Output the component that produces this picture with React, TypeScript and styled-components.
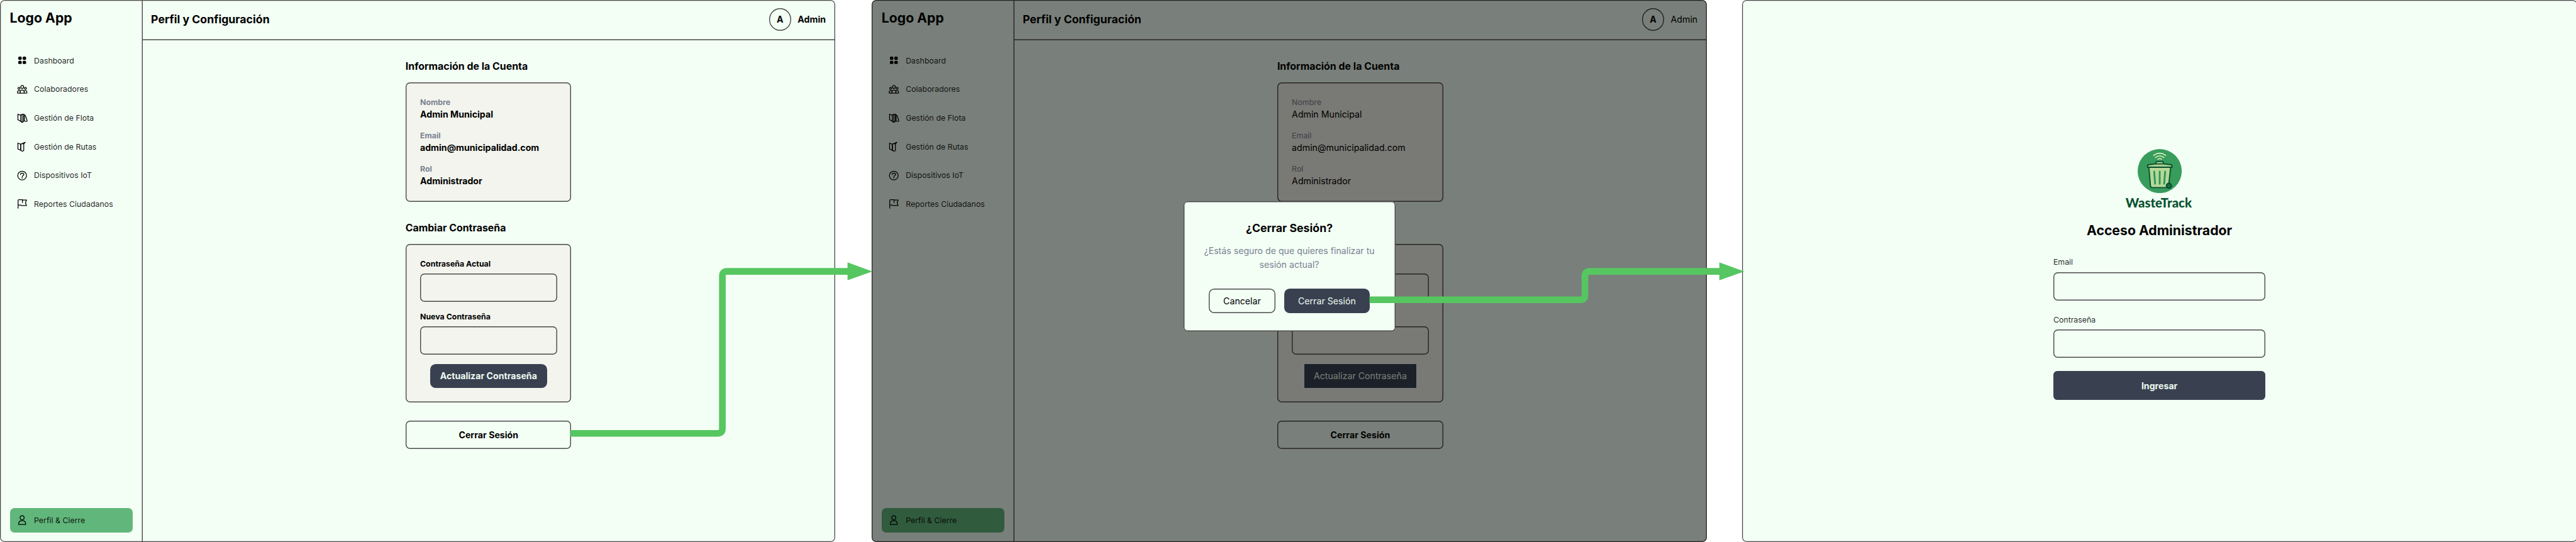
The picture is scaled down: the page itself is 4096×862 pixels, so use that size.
import React from "react";
import styled, { createGlobalStyle, css } from "styled-components";

/* The board is measured in canvas units; u() turns them into screen pixels. */
const SCALE = 4096 / 5784;
const u = (n: number) => `${+(n * SCALE).toFixed(3)}px`;

const color = {
  page: "#f3fef5",
  card: "#f2f4ed",
  cardDim: "#f3f2ea",
  line: "#4a4a4a",
  navy: "#394151",
  navyText: "#eefaf0",
  muted: "#7b8291",
  active: "#61b67b",
  flow: "#56c661",
  brand: "#07512f",
};

const stroke = css`
  box-shadow: inset 0 0 0 ${u(2)} ${color.line};
`;

const GlobalStyle = createGlobalStyle`
  *, *::before, *::after { box-sizing: border-box; }
  body { margin: 0; background: #fff; font-family: Inter, sans-serif; color: #000; }
  h1, h2, p { margin: 0; }
`;

const Board = styled.div`
  position: relative;
  display: flex;
  width: 4096px;
  height: 862px;
  overflow: hidden;
  background: #fff;
`;

const Frame = styled.section<{ $gap?: number }>`
  position: relative;
  flex: none;
  display: flex;
  width: ${u(1875)};
  height: 862px;
  margin-left: ${(p) => u(p.$gap ?? 0)};
  border-radius: ${u(10)};
  overflow: hidden;
  background: ${color.page};
`;

const FrameOutline = styled.div`
  position: absolute;
  inset: 0;
  border-radius: inherit;
  pointer-events: none;
  box-shadow: inset 0 0 0 ${u(1.8)} ${color.line};
`;

/* ---------- sidebar ---------- */

const Sidebar = styled.aside`
  flex: none;
  display: flex;
  flex-direction: column;
  width: ${u(320.4)};
  padding: ${u(19.3)} ${u(22.7)} ${u(21.3)} ${u(22)};
  box-shadow: inset -${u(2)} 0 0 ${color.line};
`;

const Brand = styled.h1`
  font-size: ${u(30)};
  line-height: ${u(40)};
  font-weight: 700;
`;

const Nav = styled.nav`
  flex: 1;
  display: flex;
  flex-direction: column;
  gap: ${u(9.45)};
  margin-top: ${u(49.1)};
`;

const NavItem = styled.a<{ $active?: boolean }>`
  display: flex;
  align-items: center;
  gap: ${u(14)};
  height: ${u(55)};
  padding-left: ${u(14.3)};
  border-radius: ${u(10)};
  font-size: ${u(17.5)};
  color: rgba(0, 0, 0, 0.88);
  ${(p) =>
    p.$active &&
    css`
      margin-top: auto;
      background: ${color.active};
    `}
`;

const Glyph = styled.svg.attrs({ viewBox: "0 0 26 26" })`
  flex: none;
  width: ${u(26)};
  height: ${u(26)};
  overflow: visible;
  fill: none;
  stroke: #000;
  stroke-width: 1.8;
  stroke-linecap: round;
  stroke-linejoin: round;
`;

/* ---------- main area ---------- */

const Main = styled.main`
  flex: 1;
  display: flex;
  flex-direction: column;
`;

const TopBar = styled.header`
  display: flex;
  align-items: center;
  height: ${u(90.4)};
  padding: 0 ${u(21)} ${u(3)} ${u(18.6)};
  box-shadow: inset 0 -${u(2)} 0 ${color.line};
`;

const PageTitle = styled.h2`
  flex: 1;
  font-size: ${u(25)};
  font-weight: 700;
`;

const Avatar = styled.div`
  display: grid;
  place-items: center;
  width: ${u(49.8)};
  height: ${u(49.8)};
  margin-right: ${u(14.8)};
  border-radius: 50%;
  font-size: ${u(20)};
  font-weight: 700;
  ${stroke}
`;

const UserName = styled.span<{ $light?: boolean }>`
  width: ${(p) => u(p.$light ? 60 : 63)};
  font-size: ${u(20)};
  font-weight: ${(p) => (p.$light ? 400 : 700)};
`;

const Column = styled.div`
  display: flex;
  flex-direction: column;
  align-self: center;
  width: ${u(371.7)};
  margin: ${u(44.2)} ${u(1.6)} 0 0;
`;

const SectionTitle = styled.h2<{ $top?: number }>`
  margin: ${(p) => u(p.$top ?? 0)} 0 ${u(20.4)} -${u(0.6)};
  font-size: ${u(22.5)};
  line-height: ${u(30)};
  font-weight: 700;
  white-space: nowrap;
`;

const Card = styled.div<{ $height: number; $dim?: boolean }>`
  display: flex;
  flex-direction: column;
  height: ${(p) => u(p.$height)};
  padding: ${u(32.6)} ${u(32.2)};
  border-radius: ${u(10)};
  background: ${(p) => (p.$dim ? color.cardDim : color.card)};
  ${stroke}
`;

const Detail = styled.div<{ $light?: boolean }>`
  display: flex;
  flex-direction: column;
  margin-bottom: ${u(19.9)};
  font-size: ${u(20)};
  line-height: ${u(30.6)};
  font-weight: ${(p) => (p.$light ? 400 : 700)};
  white-space: nowrap;
`;

const DetailName = styled.span`
  font-size: ${u(17.5)};
  line-height: ${u(24)};
  color: ${color.muted};
`;

const FieldLabel = styled.label<{ $bold?: boolean }>`
  margin-bottom: ${u(10.6)};
  font-size: ${u(17.5)};
  line-height: ${u(24)};
  font-weight: ${(p) => (p.$bold ? 700 : 400)};
  color: ${(p) => (p.$bold ? "#000" : "rgba(0, 0, 0, 0.86)")};
`;

const Field = styled.div<{ $after: number }>`
  height: ${u(64)};
  margin-bottom: ${(p) => u(p.$after)};
  border-radius: ${u(10)};
  ${stroke}
`;

const Button = styled.div<{
  $width?: number;
  $height?: number;
  $filled?: boolean;
  $regular?: boolean;
  $radius?: number;
}>`
  display: flex;
  align-items: center;
  justify-content: center;
  align-self: center;
  width: ${(p) => (p.$width ? u(p.$width) : "100%")};
  height: ${(p) => u(p.$height ?? 54.7)};
  border-radius: ${(p) => u(p.$radius ?? 12.5)};
  font-size: ${u(20)};
  font-weight: ${(p) => (p.$regular ? 400 : 700)};
  white-space: nowrap;
  ${(p) =>
    p.$filled
      ? css`
          background: ${color.navy};
          color: ${color.navyText};
        `
      : stroke}
`;

const SignOut = styled(Button)`
  flex: none;
  margin-top: ${u(40.6)};
`;

/* ---------- dialog ---------- */

const Backdrop = styled.div`
  position: absolute;
  inset: 0;
  display: flex;
  align-items: center;
  justify-content: center;
  padding-bottom: ${u(20.4)};
  background: rgba(0, 0, 0, 0.5);
`;

const Dialog = styled.div`
  display: flex;
  flex-direction: column;
  align-items: center;
  width: ${u(476)};
  height: ${u(292)};
  padding-top: ${u(44)};
  border-radius: ${u(9)};
  background: ${color.page};
  ${stroke}
`;

const DialogTitle = styled.h2`
  font-size: ${u(25)};
  line-height: ${u(30)};
  font-weight: 700;
`;

const DialogText = styled.p`
  width: ${u(400)};
  margin: ${u(22)} 0 ${u(39.4)};
  font-size: ${u(20)};
  line-height: ${u(30)};
  text-align: center;
  color: ${color.muted};
`;

const DialogActions = styled.div`
  display: flex;
  gap: ${u(19.4)};
`;

/* ---------- login ---------- */

const Login = styled.div`
  display: flex;
  flex-direction: column;
  align-items: stretch;
  width: ${u(476.6)};
  margin: ${u(335)} auto 0;
`;

const LogoMark = styled.svg`
  align-self: center;
  width: ${u(99)};
  height: ${u(99)};
`;

const LogoName = styled.div`
  margin: ${u(1.4)} ${u(3.4)} 0 0;
  font-family: Lato, sans-serif;
  font-size: ${u(28.8)};
  line-height: ${u(40)};
  font-weight: 900;
  text-align: center;
  color: ${color.brand};
`;

const LoginTitle = styled.h2`
  margin: ${u(21.4)} 0 ${u(39.9)};
  font-size: ${u(30)};
  line-height: ${u(40)};
  font-weight: 700;
  text-align: center;
`;

const FlowLines = styled.svg`
  position: absolute;
  inset: 0;
  width: 4096px;
  height: 862px;
  pointer-events: none;
`;

/* ---------- icons ---------- */

const GridIcon = () => (
  <Glyph>
    <g fill="#000" stroke="none">
      <rect x="4.3" y="4.2" width="7.7" height="7.3" rx="2.4" />
      <rect x="14.2" y="4.2" width="7.7" height="7.3" rx="2.4" />
      <rect x="4.3" y="13.7" width="7.7" height="7.3" rx="2.4" />
      <rect x="14.2" y="13.7" width="7.7" height="7.3" rx="2.4" />
    </g>
  </Glyph>
);

const PeopleIcon = () => (
  <Glyph>
    <circle cx="13.1" cy="7.4" r="3.3" />
    <circle cx="5.8" cy="10.5" r="2.2" />
    <circle cx="20.4" cy="10.5" r="2.2" />
    <path d="M8.6 21.3v-2.4a4.5 4.5 0 0 1 9 0v2.4z" />
    <path d="M8.6 21.3H2.7v-2.6c0-1.9 1.2-3 3-3 1.3 0 2.2.5 2.9 1.5M17.6 21.3h5.9v-2.6c0-1.9-1.2-3-3-3-1.3 0-2.2.5-2.9 1.5" />
  </Glyph>
);

const FleetIcon = () => (
  <Glyph>
    <path d="M3.5 4.8v12.7l6.1 3.3V7.2L3.5 5.4" />
    <path d="M9.6 7.2l3.2-2h3.4v16.6l-2 1.2h-2.4l-2.2-2.2M12.9 6v16.8" />
    <path d="M16.2 5.4c2.6.6 3.6 1.6 4.4 3.8l3.4 9.6c.5 1.6-.1 2.4-1.6 2.5-2.3.2-4.2-.5-6.2-1.9M18.2 8v11" />
  </Glyph>
);

const RoutesIcon = () => (
  <Glyph>
    <path d="M3.5 4.8v13.4l6.3 3V7.4L3.5 5.6" />
    <path d="M9.8 7.4v13.8l2.6 1.8h2.2l2-1.6V6.8" />
    <path d="M9.8 7.4l4-1.6 6.2-2.6-3.4 3.6M13.2 6.6l3.4.2" />
  </Glyph>
);

const HelpIcon = () => (
  <Glyph>
    <circle cx="13" cy="13" r="9.8" />
    <path d="M9.2 10.6c.2-1.9 1.8-3 3.8-3 2.2 0 3.9 1.2 3.9 3.1 0 2.6-3.7 2.3-3.8 5" />
    <circle cx="13.1" cy="18.2" r=".4" />
  </Glyph>
);

const FlagIcon = () => (
  <Glyph>
    <path d="M3.9 22.8V5.4c0-1.2.6-1.8 1.8-1.8h8v6.6" />
    <path d="M13.7 4.4H23l-2.6 6.1 2.4 6.3H10.4l-1.2-1.2H4.2" />
  </Glyph>
);

const UserIcon = () => (
  <Glyph>
    <circle cx="13" cy="7.6" r="4.5" />
    <path d="M5.2 22.8v-1.6c0-4.2 3.2-6.8 7.8-6.8s7.8 2.6 7.8 6.8v1.6z" />
  </Glyph>
);

const TrashLogo = () => (
  <LogoMark viewBox="178.5 45 297 297">
    <circle cx="327" cy="193.5" r="148.5" fill="#389c5c" />
    <g fill="none" stroke="#e6f3c2" strokeWidth="6.5" strokeLinecap="round">
      <path d="M286 88Q327 58 368 88" />
      <path d="M299 102Q327 81 355 102" />
      <path d="M314 114Q327 106 340 114" />
    </g>
    <g stroke="#07512f" strokeWidth="8" strokeLinejoin="round" strokeLinecap="round">
      <path
        d="M254 168L265 294Q266 305 277 305H375Q386 305 387 294L401 168Z"
        fill="#b5d898"
      />
      <path d="M302 146V138Q302 129 311 129H343Q352 129 352 138V146Z" fill="#b5d898" />
      <path
        d="M245 168V160Q245 151 256 150L300 145H354L398 150Q410 151 410 160V168Z"
        fill="#a6cf8b"
      />
    </g>
    <g stroke="#2f9657" strokeWidth="12" strokeLinecap="round">
      <path d="M290 197L296 279" />
      <path d="M327 197V279" />
      <path d="M364 197L357 279" />
    </g>
    <circle cx="389" cy="293" r="21.5" fill="#07512f" />
    <circle cx="389" cy="293" r="9.5" fill="#2a8350" />
    <circle cx="389" cy="293" r="4.5" fill="#07512f" />
  </LogoMark>
);

const navItems = [
  { label: "Dashboard", Icon: GridIcon },
  { label: "Colaboradores", Icon: PeopleIcon },
  { label: "Gestión de Flota", Icon: FleetIcon },
  { label: "Gestión de Rutas", Icon: RoutesIcon },
  { label: "Dispositivos IoT", Icon: HelpIcon },
  { label: "Reportes Ciudadanos", Icon: FlagIcon },
];

const details = [
  ["Nombre", "Admin Municipal"],
  ["Email", "admin@municipalidad.com"],
  ["Rol", "Administrador"],
];

function ProfileScreen({ gap, confirming }: { gap?: number; confirming?: boolean }) {
  return (
    <Frame $gap={gap}>
      <Sidebar>
        <Brand>Logo App</Brand>
        <Nav>
          {navItems.map(({ label, Icon }) => (
            <NavItem key={label}>
              <Icon />
              {label}
            </NavItem>
          ))}
          <NavItem $active>
            <UserIcon />
            Perfil &amp; Cierre
          </NavItem>
        </Nav>
      </Sidebar>
      <Main>
        <TopBar>
          <PageTitle>Perfil y Configuración</PageTitle>
          <Avatar>A</Avatar>
          <UserName $light={confirming}>Admin</UserName>
        </TopBar>
        <Column>
          <SectionTitle>Información de la Cuenta</SectionTitle>
          <Card $height={267.7} $dim={confirming}>
            {details.map(([name, value]) => (
              <Detail key={name} $light={confirming}>
                <DetailName>{name}</DetailName>
                {value}
              </Detail>
            ))}
          </Card>
          <SectionTitle $top={44.2}>Cambiar Contraseña</SectionTitle>
          <Card $height={356.9} $dim={confirming}>
            <FieldLabel $bold>Contraseña Actual</FieldLabel>
            <Field $after={20.4} />
            <FieldLabel $bold>Nueva Contraseña</FieldLabel>
            <Field $after={20} />
            <Button
              $filled
              $width={confirming ? 252.3 : 263.3}
              $radius={confirming ? 0 : 12.5}
              $regular={confirming}
            >
              Actualizar Contraseña
            </Button>
          </Card>
          <SignOut $height={63.8} $radius={10}>
            Cerrar Sesión
          </SignOut>
        </Column>
      </Main>
      <FrameOutline />
      {confirming && (
        <Backdrop>
          <Dialog>
            <DialogTitle>¿Cerrar Sesión?</DialogTitle>
            <DialogText>
              ¿Estás seguro de que quieres finalizar tu
              <br />
              sesión actual?
            </DialogText>
            <DialogActions>
              <Button $width={149.6} $regular>
                Cancelar
              </Button>
              <Button $width={192.6} $regular $filled>
                Cerrar Sesión
              </Button>
            </DialogActions>
          </Dialog>
        </Backdrop>
      )}
    </Frame>
  );
}

function LoginScreen({ gap }: { gap: number }) {
  return (
    <Frame $gap={gap}>
      <Login>
        <TrashLogo />
        <LogoName>WasteTrack</LogoName>
        <LoginTitle>Acceso Administrador</LoginTitle>
        <FieldLabel>Email</FieldLabel>
        <Field $after={30.2} />
        <FieldLabel>Contraseña</FieldLabel>
        <Field $after={29.6} />
        <Button $filled $height={65} $radius={9}>
          Ingresar
        </Button>
      </Login>
      <FrameOutline />
    </Frame>
  );
}

export default function App() {
  return (
    <>
      <GlobalStyle />
      <Board>
        <ProfileScreen />
        <ProfileScreen gap={82.4} confirming />
        <LoginScreen gap={78.8} />
        <FlowLines viewBox="0 0 5784 1217.2" preserveAspectRatio="none">
          <g fill="none" stroke={color.flow} strokeWidth="15">
            <path d="M1281 973.2H1611.5Q1622 973.2 1622 962.7V620Q1622 609.5 1632.5 609.5H1905" />
            <path d="M3075 673.2H3548.2Q3558.7 673.2 3558.7 662.7V620Q3558.7 609.5 3569.2 609.5H3862" />
          </g>
          <path d="M1903 589.3L1958.8 609.5L1903 629.5Z" fill={color.flow} />
          <path d="M3860.5 589.3L3916.5 609.5L3860.5 629.5Z" fill={color.flow} />
        </FlowLines>
      </Board>
    </>
  );
}
